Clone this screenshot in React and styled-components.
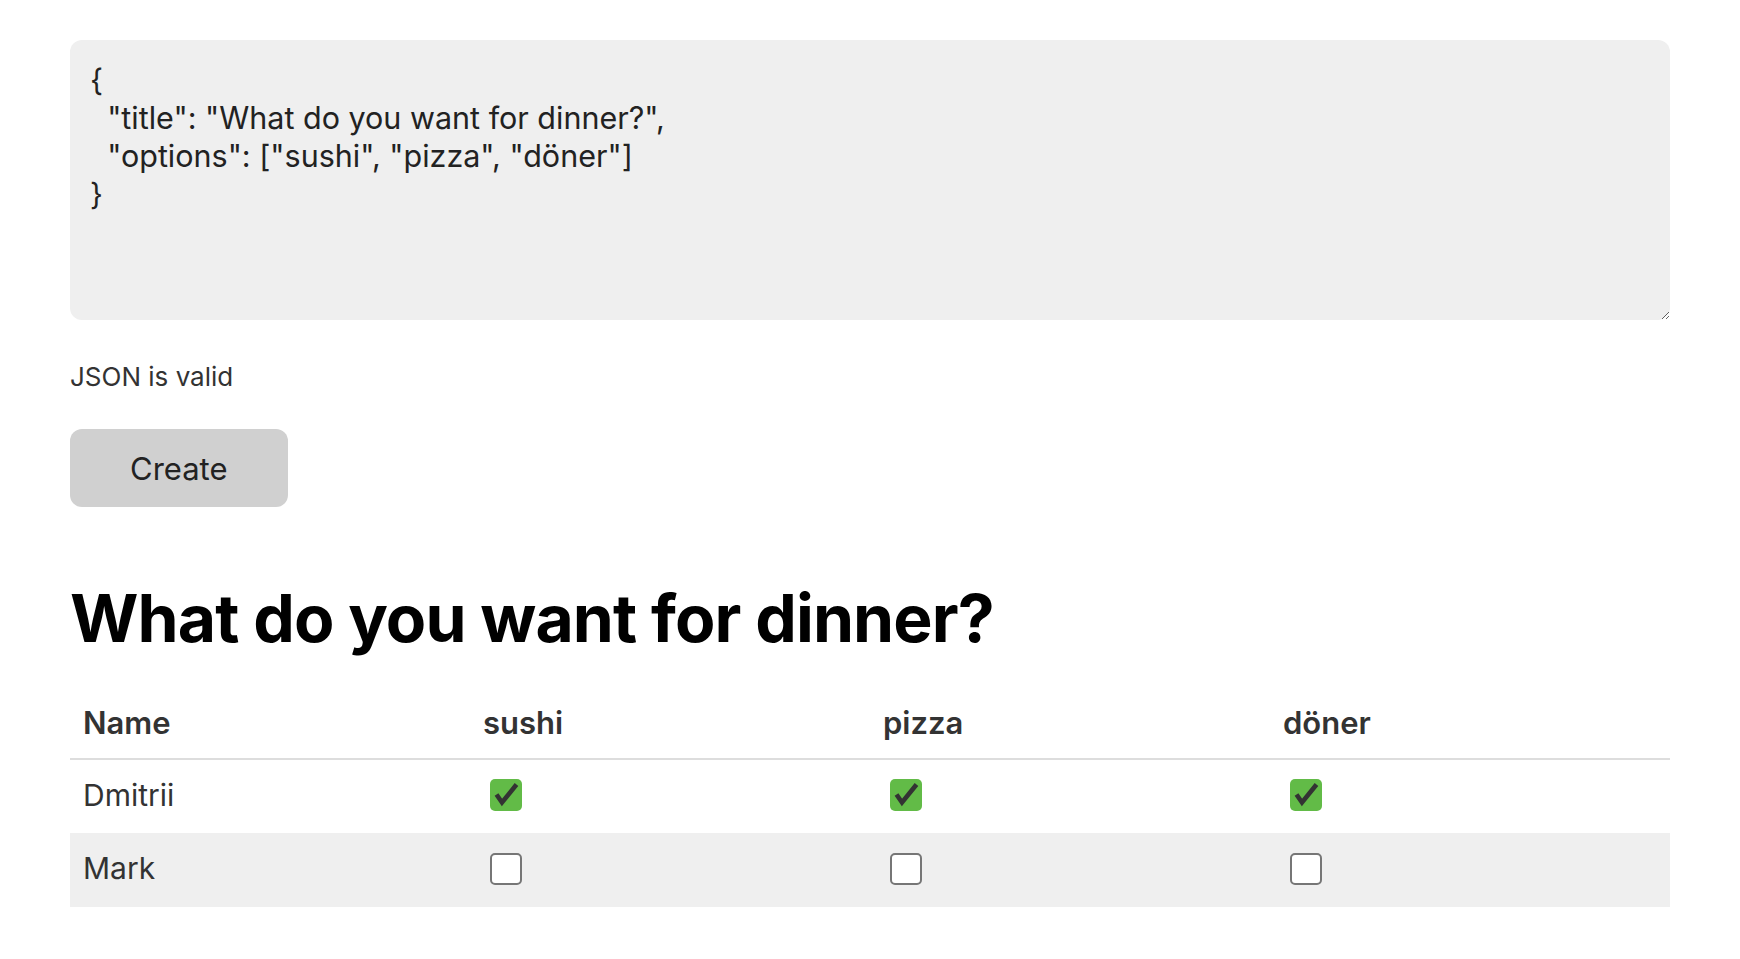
import React, { useState } from "react";
import styled, { createGlobalStyle } from "styled-components";

const GlobalStyle = createGlobalStyle`
  html, body {
    margin: 0;
    padding: 0;
    background: #ffffff;
  }
  body {
    font-family: Inter, "Noto Sans", "Liberation Sans", sans-serif;
    color: #333333;
  }
  * { box-sizing: border-box; }
`;

const Page = styled.main`
  display: flex;
  flex-direction: column;
  align-items: flex-start;
  padding: 40px 70px 40px 70px;
`;

const Editor = styled.textarea`
  width: 100%;
  height: 280px;
  margin: 0;
  padding: 21px 20px;
  border: none;
  outline: none;
  border-radius: 12px;
  background: #efefef;
  color: #222222;
  font-family: Inter, "Noto Sans", "Liberation Sans", sans-serif;
  font-size: 30.5px;
  line-height: 38px;
  resize: vertical;
`;

const Status = styled.p`
  margin: 40px 0 0 0;
  font-size: 26px;
  line-height: 34px;
  color: #333333;
`;

const CreateButton = styled.button`
  margin-top: 35px;
  padding: 0 60px;
  height: 78px;
  border: none;
  border-radius: 12px;
  background: #d0d0d0;
  color: #222222;
  font-family: Inter, "Noto Sans", "Liberation Sans", sans-serif;
  font-size: 31px;
  cursor: pointer;
`;

const Title = styled.h1`
  margin: 72px 0 0 0;
  font-size: 66px;
  line-height: 78px;
  font-weight: 700;
  letter-spacing: -0.9px;
  color: #000000;
`;

const Table = styled.table`
  width: 100%;
  margin-top: 26px;
  border-collapse: collapse;
  table-layout: fixed;
`;

const HeadCell = styled.th`
  height: 76px;
  padding: 4px 13px 0 13px;
  text-align: left;
  vertical-align: middle;
  font-size: 31px;
  font-weight: 600;
  color: #333333;
  border-bottom: 2px solid #dddddd;
`;

const Row = styled.tr`
  background: ${(p) => (p.$striped ? "#efefef" : "transparent")};
`;

const Cell = styled.td`
  height: 74px;
  padding: 0 13px 4px 13px;
  vertical-align: middle;
  font-size: 30px;
  color: #333333;
`;

const BoxLabel = styled.label`
  display: inline-flex;
  margin-left: 7px;
  margin-bottom: 2px;
  vertical-align: middle;
  cursor: pointer;
`;

const HiddenInput = styled.input`
  position: absolute;
  opacity: 0;
  width: 0;
  height: 0;
  margin: 0;
`;

const Box = styled.span`
  display: inline-flex;
  align-items: center;
  justify-content: center;
  width: 32px;
  height: 32px;
  border-radius: 5px;
  background: ${(p) => (p.$checked ? "#62bb47" : "#ffffff")};
  border: ${(p) => (p.$checked ? "none" : "2px solid #767676")};
`;

function Check({ checked, onChange }) {
  return (
    <BoxLabel>
      <HiddenInput type="checkbox" checked={checked} onChange={onChange} />
      <Box $checked={checked}>
        {checked && (
          <svg width="32" height="32" viewBox="0 0 32 32">
            <path
              d="M6.5 15.5 L12 23.5 L26.5 5.5"
              fill="none"
              stroke="#333333"
              strokeWidth="4.6"
              strokeLinecap="butt"
              strokeLinejoin="miter"
            />
          </svg>
        )}
      </Box>
    </BoxLabel>
  );
}

const initialJson = `{
  "title": "What do you want for dinner?",
  "options": ["sushi", "pizza", "döner"]
}`;

export default function App() {
  const [text, setText] = useState(initialJson);
  const options = ["sushi", "pizza", "döner"];
  const [votes, setVotes] = useState({
    Dmitrii: [true, true, true],
    Mark: [false, false, false],
  });

  const toggle = (name, i) =>
    setVotes((v) => ({
      ...v,
      [name]: v[name].map((x, j) => (j === i ? !x : x)),
    }));

  return (
    <>
      <GlobalStyle />
      <Page>
        <Editor
          value={text}
          onChange={(e) => setText(e.target.value)}
          spellCheck={false}
        />
        <Status>JSON is valid</Status>
        <CreateButton>Create</CreateButton>
        <Title>What do you want for dinner?</Title>
        <Table>
          <thead>
            <tr>
              <HeadCell>Name</HeadCell>
              {options.map((o) => (
                <HeadCell key={o}>{o}</HeadCell>
              ))}
            </tr>
          </thead>
          <tbody>
            {Object.keys(votes).map((name, idx) => (
              <Row key={name} $striped={idx % 2 === 1}>
                <Cell>{name}</Cell>
                {votes[name].map((c, i) => (
                  <Cell key={i}>
                    <Check checked={c} onChange={() => toggle(name, i)} />
                  </Cell>
                ))}
              </Row>
            ))}
          </tbody>
        </Table>
      </Page>
    </>
  );
}
